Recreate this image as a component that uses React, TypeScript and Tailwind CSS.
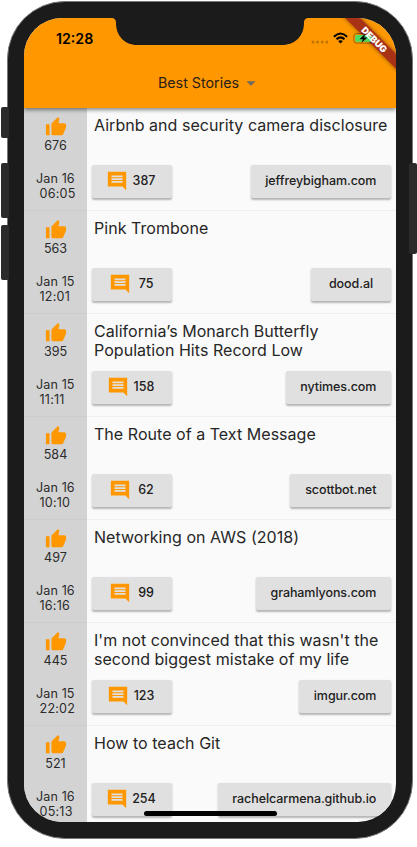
import React from "react";

type Story = { title: string; score: number; date: string; time: string; comments: number; domain: string };

const stories: Story[] = [
  { title: "Airbnb and security camera disclosure", score: 676, date: "Jan 16", time: "06:05", comments: 387, domain: "jeffreybigham.com" },
  { title: "Pink Trombone", score: 563, date: "Jan 15", time: "12:01", comments: 75, domain: "dood.al" },
  { title: "California’s Monarch Butterfly Population Hits Record Low", score: 395, date: "Jan 15", time: "11:11", comments: 158, domain: "nytimes.com" },
  { title: "The Route of a Text Message", score: 584, date: "Jan 16", time: "10:10", comments: 62, domain: "scottbot.net" },
  { title: "Networking on AWS (2018)", score: 497, date: "Jan 16", time: "16:16", comments: 99, domain: "grahamlyons.com" },
  { title: "I'm not convinced that this wasn't the second biggest mistake of my life", score: 445, date: "Jan 15", time: "22:02", comments: 123, domain: "imgur.com" },
  { title: "How to teach Git", score: 521, date: "Jan 16", time: "05:13", comments: 254, domain: "rachelcarmena.github.io" },
];

function ThumbUp() {
  return (
    <svg viewBox="0 0 24 24" className="block size-[22px] shrink-0 fill-[#ff9800]">
      <path d="M1 21h4V9H1v12zm22-11c0-1.1-.9-2-2-2h-6.31l.95-4.57.03-.32c0-.41-.17-.79-.44-1.06L14.17 1 7.59 7.59C7.22 7.95 7 8.45 7 9v10c0 1.1.9 2 2 2h9c.83 0 1.54-.5 1.84-1.22l3.02-7.05c.09-.23.14-.47.14-.73v-2z" />
    </svg>
  );
}

function CommentIcon() {
  return (
    <svg viewBox="0 0 24 24" className="block size-[22px] shrink-0 fill-[#ff9800]">
      <path d="M22 2H2v16h16l4 4V2zM18 14H6v-2h12v2zm0-3H6V9h12v2zm0-3H6V6h12v2z" />
    </svg>
  );
}

const buttonClass =
  "flex h-[32.5px] min-w-[80px] items-center justify-center rounded-[2px] bg-[#e0e0e0] text-[12.5px] font-medium text-[#212121] shadow-[0_1.5px_2px_rgba(0,0,0,0.28)]";

function StoryRow({ story }: { story: Story }) {
  return (
    <div className="flex h-[103px] shrink-0">
      <div className="flex w-[63px] shrink-0 flex-col items-center border-b border-[#cccccc] bg-[#d3d3d3] pt-[8px] text-[12.6px] leading-[15.5px] text-[#2b2b2b]">
        <ThumbUp />
        <div>{story.score}</div>
        <div className="mt-[17.5px] w-[39px] whitespace-nowrap tracking-[0.1px]">
          <div>{story.date}</div>
          <div className="pl-[3.5px] tracking-[0.2px]">{story.time}</div>
        </div>
      </div>
      <div className="flex min-w-0 flex-1 flex-col justify-between border-b border-[#f0f0f0] pt-[8px] pb-[11.9px] pl-[5px] pr-[5px]">
        <div className="w-[300px] pl-[2px] text-[16px] leading-[19px] tracking-[0.04px] text-[#262626]">{story.title}</div>
        <div className="flex justify-between">
          <div className={buttonClass + (story.comments < 100 ? " gap-[7.5px] pr-[1.5px]" : " gap-[4.5px] pr-[2.5px]")}>
            <CommentIcon />
            <span>{story.comments}</span>
          </div>
          <div className={buttonClass + " px-[14.7px] tracking-[-0.08px]"}>{story.domain}</div>
        </div>
      </div>
    </div>
  );
}

export default function App() {
  return (
    <div className="relative h-[847px] w-[417px] overflow-hidden bg-white font-['Inter','Liberation_Sans',sans-serif]">
      {/* Side buttons of the handset */}
      <div className="absolute left-[1px] top-[107px] h-[31px] w-[8px] rounded-[2px] bg-[#2b2b2b]" />
      <div className="absolute left-[1px] top-[163px] h-[55px] w-[8px] rounded-[2px] bg-[#2b2b2b]" />
      <div className="absolute left-[1px] top-[225px] h-[55px] w-[8px] rounded-[2px] bg-[#2b2b2b]" />
      <div className="absolute left-[409px] top-[163px] h-[91px] w-[8px] rounded-[2px] bg-[#2b2b2b]" />

      <div className="ml-[7px] pt-[1px]">
        <div className="h-[838px] w-[406px] rounded-[58px] border border-[#777777] bg-[#1b1b1b] px-[16px] pt-[16px]">
          <div className="relative flex h-[804px] w-[372px] flex-col overflow-hidden rounded-[38px] bg-[#fafafa]">
            <header className="relative z-10 flex h-[89.5px] shrink-0 flex-col bg-[#ff9800] shadow-[0_2px_4px_rgba(0,0,0,0.45)]">
              <div className="flex h-[41px] items-center pl-[32px]">
                <span className="text-[14.2px] font-semibold text-black">12:28</span>
              </div>
              <div className="flex h-[48px] items-center justify-center gap-[1px] text-[14.3px] text-[#2b2118]">
                Best Stories
                <svg viewBox="0 0 24 24" className="size-[22px] fill-[#6f6a62]">
                  <path d="M7 10l5 5 5-5z" />
                </svg>
              </div>
            </header>
            {stories.map((s) => (
              <StoryRow key={s.title} story={s} />
            ))}

            {/* Ribbon, notch, status glyphs and home indicator float over the app */}
            <svg viewBox="0 0 372 90" className="absolute left-0 top-0 z-20 h-[90px] w-[372px]">
              <defs>
                <filter id="ribbonShadow" x="-20%" y="-80%" width="140%" height="260%">
                  <feDropShadow dx="0" dy="0" stdDeviation="2.2" floodOpacity="0.45" />
                </filter>
              </defs>
              <path d="M87 0C90.500 0 92 1.500 92 5C92 18 101 27 113 27H258C271 27 280 18 280 5C280 1.500 281.500 0 285 0Z" fill="#1b1b1b" />
              <g fill="#000000" fillOpacity="0.25">
                <circle cx="289" cy="23.900" r="1.500" />
                <circle cx="293.600" cy="23.900" r="1.500" />
                <circle cx="298.200" cy="23.900" r="1.500" />
                <circle cx="302.800" cy="23.900" r="1.500" />
              </g>
              <g fill="none" stroke="#000" strokeWidth="2.100">
                <path d="M309.900 18.700Q316.500 12.300 323.100 18.700" />
                <path d="M312.500 21.300Q316.500 17.600 320.500 21.300" />
              </g>
              <path d="M314.100 23.100Q316.500 21.300 318.900 23.100L316.500 25.500Z" />
              <g transform="translate(372 0) rotate(45)">
                <rect x="-50" y="25.200" width="100" height="10.800" fill="#a83216" filter="url(#ribbonShadow)" />
              </g>
              <rect x="329.800" y="15.500" width="19" height="9.600" rx="2.500" fill="none" stroke="#000" strokeOpacity="0.4" strokeWidth="0.9" />
              <path d="M350 18.800V21.900Q351.400 20.400 350 18.800Z" fillOpacity="0.4" />
              <rect x="331.200" y="16.900" width="16.200" height="6.800" rx="1.200" fill="#4cd964" />
              <text transform="translate(372 0) rotate(45)" x="0" y="34" textAnchor="middle" fontSize="9.2" fontWeight="900" fill="#fff" fontFamily="Inter, sans-serif">DEBUG</text>
              <path d="M341.500 15.500L335.500 21.200H339L337.300 25.100L343.500 19.500H340Z" />
            </svg>
            <div className="absolute bottom-[6.5px] left-[119.5px] z-20 h-[5px] w-[133px] rounded-full bg-black" />
          </div>
        </div>
      </div>
    </div>
  );
}
